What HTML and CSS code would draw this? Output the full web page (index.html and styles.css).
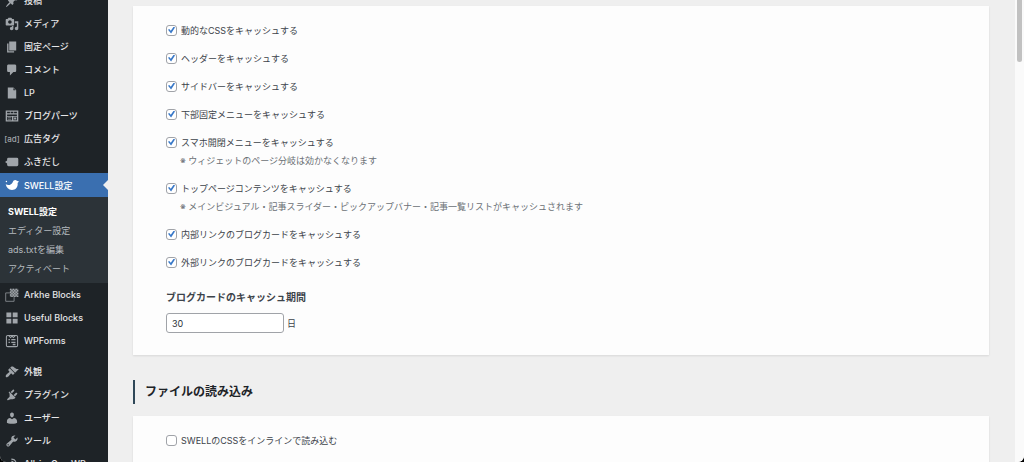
FILE: index.html
```html
<!DOCTYPE html>
<html lang="ja">
<head>
  <meta charset="UTF-8">
  <title>SWELL設定</title>
  <link rel="stylesheet" href="styles.css">
</head>
<body>
  <div class="window">
    <nav class="sidebar">
      <ul class="menu">
        <li><a href="#"><svg class="icon" viewBox="0 0 20 20"><path d="M10.44 3.02l1.82-1.82 6.36 6.35-1.83 1.82c-1.05-.68-2.48-.57-3.41.36l-.75.75c-.92.93-1.04 2.35-.35 3.41l-1.83 1.82-2.41-2.41-2.8 2.79c-.42.42-3.38 2.71-3.8 2.29s1.86-3.39 2.28-3.81l2.79-2.79L4.1 9.36l1.83-1.82c1.05.69 2.48.57 3.4-.36l.75-.75c.93-.92 1.05-2.35.36-3.41z"/></svg>投稿</a></li>
        <li><a href="#"><svg class="icon" viewBox="0 0 20 20"><path d="M13 11V4c0-.55-.45-1-1-1h-1.67L9 1H5L3.67 3H2c-.55 0-1 .45-1 1v7c0 .55.45 1 1 1h10c.55 0 1-.45 1-1zM7 4.5c1.38 0 2.5 1.12 2.5 2.5S8.38 9.5 7 9.5 4.5 8.38 4.5 7 5.62 4.5 7 4.5zM14 6h5v10.5c0 1.38-1.12 2.5-2.5 2.5S14 17.88 14 16.5s1.12-2.5 2.5-2.5c.17 0 .34.02.5.05V9h-3V6zm-4 8.05V13h2v3.5c0 1.38-1.12 2.5-2.5 2.5S7 17.88 7 16.5 8.12 14 9.5 14c.17 0 .34.02.5.05z"/></svg>メディア</a></li>
        <li><a href="#"><svg class="icon" viewBox="0 0 20 20"><path d="M6 15V2h10v13H6zm-1 1h8v2H3V5h2v11z"/></svg>固定ページ</a></li>
        <li><a href="#"><svg class="icon" viewBox="0 0 20 20"><path d="M5 2h9c1.1 0 2 .9 2 2v7c0 1.1-.9 2-2 2h-2l-5 5v-5H5c-1.1 0-2-.9-2-2V4c0-1.1.9-2 2-2z"/></svg>コメント</a></li>
        <li><a href="#"><svg class="icon" viewBox="0 0 20 20"><path d="M12 2l4 4v12H4V2h8zm0 4h3l-3-3v3z"/></svg>LP</a></li>
        <li><a href="#"><svg class="icon" viewBox="0 0 20 20"><path fill-rule="evenodd" d="M1 2h18v16H1zM3 4v2h4V4zM8 4v2h4V4zM13 4v2h4V4zM3 8v2h14V8zM3 11v5h7v-5zM12 11v5h5v-5z"/><path d="M4 12h5v1H4zM4 14h5v1H4zM13 12h3v3h-3z"/></svg>ブログパーツ</a></li>
        <li><a href="#"><span class="icon icon-ad">[ad]</span>広告タグ</a></li>
        <li><a href="#"><svg class="icon" viewBox="0 0 20 20"><path d="M5 4h12q2 0 2 2v8q0 2-2 2H5q-2 0-2-2v-2L0 10l3-2V6q0-2 2-2z"/></svg>ふきだし</a></li>
        <li class="current">
          <a href="#"><svg class="icon" viewBox="0 0 20 20"><path d="M1 9c4 2 8 1 10-3 1-3 4-4 6-2l3 1-2 2c1 6-3 10-8 10-5 0-8-3-9-8z"/><circle cx="2" cy="5" r="1"/></svg>SWELL設定</a>
          <ul class="submenu">
            <li><a class="on" href="#">SWELL設定</a></li>
            <li><a href="#">エディター設定</a></li>
            <li><a href="#">ads.txtを編集</a></li>
            <li><a href="#">アクティベート</a></li>
          </ul>
        </li>
        <li><a href="#"><svg class="icon" viewBox="0 0 20 20"><path class="line thin" d="M7 7H1v12h12v-6"/><path d="M7 1h2v2H7zM11 1h2v2h-2zM15 1h2v2h-2zM9 3h2v2H9zM13 3h2v2h-2zM17 3h2v2h-2zM7 5h2v2H7zM11 5h2v2h-2zM15 5h2v2h-2zM9 7h2v2H9zM13 7h2v2h-2zM17 7h2v2h-2zM7 9h2v2H7zM11 9h2v2h-2zM15 9h2v2h-2zM9 11h2v2H9zM13 11h2v2h-2zM17 11h2v2h-2z"/><path opacity=".5" d="M7 1h12v12H7z"/></svg>Arkhe Blocks</a></li>
        <li><a href="#"><svg class="icon" viewBox="0 0 20 20"><path d="M9 9V2H2v7h7zm9 0V2h-7v7h7zm-9 9v-7H2v7h7zm9 0v-7h-7v7h7z"/></svg>Useful Blocks</a></li>
        <li><a href="#"><svg class="icon" viewBox="0 0 20 20"><rect class="line" x="2" y="2" width="16" height="16" rx="2"/><path class="line" d="M5 2l3 3 2-2 2 2 3-3"/><path d="M5 7h2v2H5zM9 7h6v2H9zM5 11h2v2H5zM9 11h6v2H9zM11 14h4v2h-4z"/></svg>WPForms</a></li>
      </ul>
      <ul class="menu">
        <li><a href="#"><svg class="icon" viewBox="0 0 20 20"><path d="M14.48 11.06L7.41 3.99l1.5-1.5c.5-.56 2.3-.47 3.51.32 1.21.8 1.43 1.28 2.91 2.1 1.18.64 2.45 1.26 4.45.85zm-.71.71L6.7 4.7 4.93 6.47c-.39.39-.39 1.02 0 1.41l1.06 1.06c.39.39.39 1.03 0 1.42-.6.6-1.43 1.11-2.21 1.69-.35.26-.7.53-1.01.84C1.43 14.23.4 16.08 1.4 17.07c.99 1 2.84-.03 4.18-1.36.31-.31.58-.66.85-1.02.57-.78 1.08-1.61 1.69-2.21.39-.39 1.02-.39 1.41 0l1.06 1.06c.39.39 1.02.39 1.41 0z"/></svg>外観</a></li>
        <li><a href="#"><svg class="icon" viewBox="0 0 20 20"><path d="M13.11 4.36L9.87 7.6 8 5.73l3.24-3.24c.35-.34 1.05-.2 1.56.32.52.51.66 1.21.31 1.55zm-8 1.77l.91-1.12 9.01 9.01-1.19.84c-.71.71-2.63 1.16-3.82 1.16H8.14L4.9 17.26c-.37.38-1.16.38-1.58-.04-.41-.41-.38-1.24 0-1.61l3.24-3.24v-1.88c0-1.19.21-2.98-1.45-4.36zm7.26 3.97l3.24-3.24c.34-.35 1.04-.21 1.55.31.52.51.66 1.21.31 1.55l-3.24 3.25z"/></svg>プラグイン</a></li>
        <li><a href="#"><svg class="icon" viewBox="0 0 20 20"><path d="M10 9.25c-2.27 0-2.73-3.44-2.73-3.44C7 4.02 7.82 2 9.97 2c2.16 0 2.98 2.02 2.71 3.81 0 0-.41 3.44-2.68 3.44zm0 2.57L12.72 10c2.39 0 4.52 2.33 4.52 4.53v2.49s-3.65 1.13-7.24 1.13c-3.65 0-7.24-1.13-7.24-1.13v-2.49c0-2.25 1.94-4.48 4.47-4.48z"/></svg>ユーザー</a></li>
        <li><a href="#"><svg class="icon" viewBox="0 0 20 20"><path d="M16.68 9.77c-1.34 1.34-3.3 1.67-4.95.99l-5.41 6.52c-.99.99-2.59.99-3.58 0s-.99-2.59 0-3.57l6.52-5.42c-.68-1.65-.35-3.61.99-4.95 1.28-1.28 3.12-1.62 4.72-1.06l-2.89 2.89 2.82 2.82 2.86-2.87c.53 1.58.18 3.39-1.08 4.65zM3.81 16.21c.4.39 1.04.39 1.43 0 .4-.4.4-1.04 0-1.43-.39-.4-1.03-.4-1.43 0-.39.39-.39 1.03 0 1.43z"/></svg>ツール</a></li>
        <li><a href="#"><svg class="icon" viewBox="0 0 20 20"><path class="line" d="M9 3q6 0 7 6M9 6q3 0 4 4"/></svg>All-in-One WP</a></li>
      </ul>
    </nav>

    <main class="content">
      <section class="card">
        <div class="field"><label><input type="checkbox" checked>動的なCSSをキャッシュする</label></div>
        <div class="field"><label><input type="checkbox" checked>ヘッダーをキャッシュする</label></div>
        <div class="field"><label><input type="checkbox" checked>サイドバーをキャッシュする</label></div>
        <div class="field"><label><input type="checkbox" checked>下部固定メニューをキャッシュする</label></div>
        <div class="field">
          <label><input type="checkbox" checked>スマホ開閉メニューをキャッシュする</label>
          <p class="note">※ ウィジェットのページ分岐は効かなくなります</p>
        </div>
        <div class="field">
          <label><input type="checkbox" checked>トップページコンテンツをキャッシュする</label>
          <p class="note">※ メインビジュアル・記事スライダー・ピックアップバナー・記事一覧リストがキャッシュされます</p>
        </div>
        <div class="field"><label><input type="checkbox" checked>内部リンクのブログカードをキャッシュする</label></div>
        <div class="field"><label><input type="checkbox" checked>外部リンクのブログカードをキャッシュする</label></div>
        <label class="field-title" for="cacheDays">ブログカードのキャッシュ期間</label>
        <div class="days"><input type="text" id="cacheDays" value="30">日</div>
      </section>

      <h2>ファイルの読み込み</h2>
      <section class="card">
        <div class="field"><label><input type="checkbox">SWELLのCSSをインラインで読み込む</label></div>
      </section>
    </main>

    <div class="scrollbar"><div class="thumb"></div></div>
  </div>
</body>
</html>
```
FILE: styles.css
```css
* {
  box-sizing: border-box;
}
body {
  margin: 0;
  background: #000;
  color: #3c434a;
  font-family: Inter, "Noto Sans CJK JP", sans-serif;
  font-size: 9px;
}
ul {
  list-style: none;
  margin: 0;
  padding: 0;
}
a {
  text-decoration: none;
}
.window {
  display: flex;
  height: 100vh;
  overflow: hidden;
  background: #efefef;
  border-radius: 0 0 6px 6px;
}

/* sidebar, scrolled a little past its first item */
.sidebar {
  flex: none;
  width: 108px;
  margin-top: -11px;
  background: #1e2327;
}
.menu {
  margin-bottom: 8px;
}
.menu a {
  display: flex;
  align-items: center;
  gap: 5px;
  height: 23px;
  padding-left: 5px;
  color: #e6e6e8;
  font-weight: 500;
  white-space: nowrap;
}
.icon {
  flex: none;
  width: 14px;
  height: 14px;
  fill: #a0a5aa;
}
.icon .line {
  fill: none;
  stroke: #a0a5aa;
  stroke-width: 1.5;
}
.icon .thin {
  stroke-width: 1;
}
.icon-ad {
  display: flex;
  justify-content: center;
  color: #a0a5aa;
  font-size: 8px;
  line-height: 14px;
}
.menu .current > a {
  position: relative;
  height: 24px;
  background: #3a6fb0;
  color: #fff;
}
.current > a .icon {
  fill: #fff;
}
.current > a::after {
  content: "";
  position: absolute;
  right: 0;
  top: 7px;
  border: 5px solid transparent;
  border-right-color: #efefef;
  border-left: 0;
}
.submenu {
  padding: 5px 0;
  background: #2c3338;
}
.submenu a {
  height: 19px;
  padding-left: 8px;
  color: #b4b9be;
  font-weight: 400;
}
.submenu .on {
  color: #fff;
  font-weight: 700;
}

/* settings */
.content {
  flex: 1;
  padding: 6px 26px 0 25px;
}
.card {
  padding: 15px 33px 22px;
  background: #fdfdfd;
  box-shadow: 0 1px 2px rgba(0, 0, 0, .1);
}
.field {
  margin-bottom: 10px;
}
.field label {
  display: flex;
  align-items: center;
  gap: 4px;
  height: 18px;
}
input[type="checkbox"] {
  appearance: none;
  display: grid;
  place-items: center;
  width: 11px;
  height: 11px;
  margin: 0;
  border: 1px solid #a0a3a8;
  border-radius: 3px;
  background: #fff;
}
input[type="checkbox"]:checked::before {
  content: "";
  width: 7px;
  height: 7px;
  background: #3878c8;
  clip-path: polygon(0 48%, 18% 35%, 40% 60%, 82% 0, 100% 14%, 44% 100%);
}
.note {
  height: 18px;
  margin: 0 0 0 14px;
  color: #6b7075;
  line-height: 19px;
}
.field-title {
  display: block;
  margin-top: 17px;
  font-size: 10px;
  font-weight: 700;
  line-height: 18px;
}
.days {
  display: flex;
  align-items: center;
  gap: 3px;
  margin-top: 7px;
}
.days input {
  width: 118px;
  height: 20px;
  padding: 0 5px;
  border: 1px solid #a0a3a8;
  border-radius: 3px;
  background: #fff;
  color: #2c3338;
  font: inherit;
}
h2 {
  margin: 25px 0 12px;
  padding-left: 10px;
  border-left: 2px solid #2f4858;
  color: #1d2327;
  font-size: 12px;
  font-weight: 700;
  line-height: 24px;
}
.scrollbar {
  flex: none;
  width: 9px;
  padding: 0 2px;
  background: #fafafa;
}
.thumb {
  height: 62px;
  border-radius: 0 0 3px 3px;
  background: #c1c1c1;
}
```
